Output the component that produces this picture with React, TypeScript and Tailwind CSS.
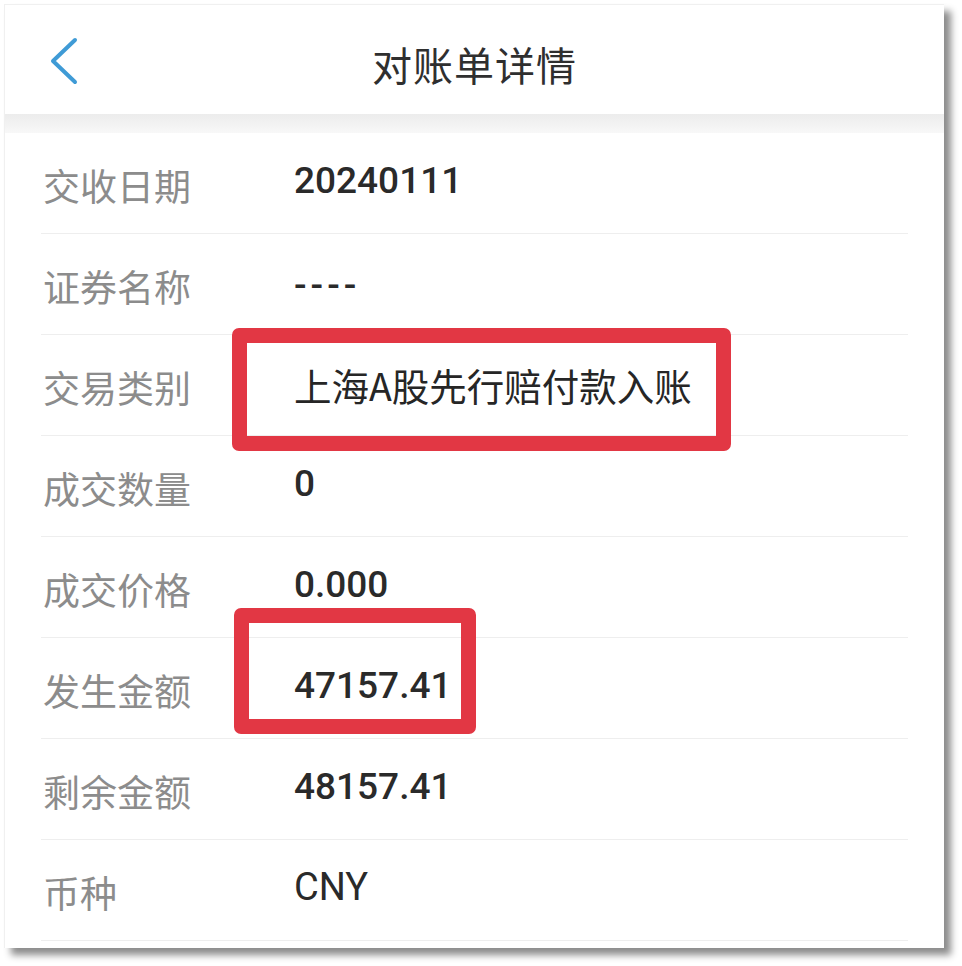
import React from "react";

const ROWS = [
  { label: "交收日期", value: "20240111" },
  { label: "证券名称", value: "----" },
  { label: "交易类别", value: "上海A股先行赔付款入账", cjk: true },
  { label: "成交数量", value: "0" },
  { label: "成交价格", value: "0.000" },
  { label: "发生金额", value: "47157.41" },
  { label: "剩余金额", value: "48157.41" },
  { label: "币种", value: "CNY", light: true },
];

export default function App() {
  return (
    <div className="w-[962px] h-[966px] bg-white pt-[4px] pl-[4px]">
      {/* Phone screenshot card */}
      <div className="relative w-[940px] h-[944px] bg-white border-t border-l border-[#f0f0f0] shadow-[7px_7px_7px_rgba(0,0,0,0.45)] font-['Noto_Sans_CJK_SC',sans-serif]">
        {/* Nav bar */}
        <header className="h-[109px] grid grid-cols-[1fr_auto_1fr] items-center">
          <div className="pl-[45px] pt-[2px]">
            <svg width="28" height="48" viewBox="0 0 28 48" fill="none">
              <path
                d="M25 3 L3 24 L25 45"
                stroke="#3f9bd6"
                strokeWidth="4"
                strokeLinecap="round"
                strokeLinejoin="round"
              />
            </svg>
          </div>
          <h1 className="pt-[8px] text-[40px] leading-none text-[#2f2f2f] tracking-[1px]">
            对账单详情
          </h1>
          <div />
        </header>

        {/* Gray divider band */}
        <div className="h-[19px] bg-gradient-to-b from-[#ececec] to-[#f8f8f8]" />

        {/* Detail rows */}
        <div className="mx-[36px]">
          {ROWS.map((row) => (
            <div
              key={row.label}
              className="h-[101px] flex items-center border-b border-[#eeeeee]"
            >
              <div className="w-[253px] pl-[2px] pt-[4px] text-[37px] leading-none text-[#8c8c8c]">
                {row.label}
              </div>
              {row.cjk ? (
                <div className="text-[37.5px] leading-none text-[#262626]">{row.value}</div>
              ) : (
                <div
                  className={`pb-[6px] leading-none text-[#2a2a2a] font-['Roboto',sans-serif] ${
                    row.light ? "text-[38px] font-normal" : "text-[37px] font-medium"
                  } ${row.value === "----" ? "tracking-[4px] pt-[8px]" : ""}`}
                >
                  {row.value}
                </div>
              )}
            </div>
          ))}
        </div>

        {/* Red highlight boxes */}
        <div className="absolute left-[227px] top-[323px] w-[499px] h-[123px] border-[15px] border-[#e23744] rounded-[7px]" />
        <div className="absolute left-[229px] top-[603px] w-[242px] h-[126px] border-[15px] border-[#e23744] rounded-[7px]" />
      </div>
    </div>
  );
}
